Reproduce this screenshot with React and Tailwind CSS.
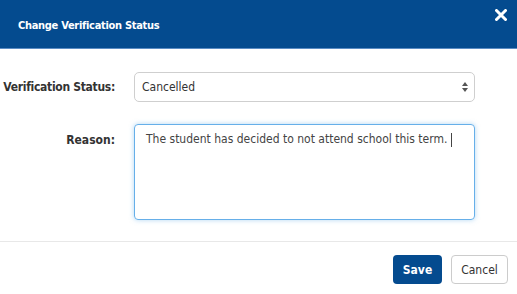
export default function App() {
  return (
    <div className="w-[517px] h-[294px] bg-white overflow-hidden" style={{ fontFamily: '"DejaVu Sans Condensed", "DejaVu Sans", sans-serif' }}>
      {/* Header */}
      <div className="h-[49px] bg-[#044b8f] border-b border-[#5b8cc4] flex items-center justify-between pl-[18px] pr-[10px]">
        <h2 className="text-white font-bold text-[11px] tracking-[-0.3px] mt-[4px]">Change Verification Status</h2>
        <button className="text-white mb-[19px]">
          <svg width="12" height="12" viewBox="0 0 12 12">
            <path d="M1.5 1.5 L10.5 10.5 M10.5 1.5 L1.5 10.5" stroke="white" strokeWidth="3" strokeLinecap="round" />
          </svg>
        </button>
      </div>

      {/* Body */}
      <div className="h-[193px] border-b border-[#e8e8e8] pt-[23px] pr-[42px]">
        <div className="flex items-center">
          <label className="w-[116px] whitespace-nowrap text-right pr-[1px] text-[12px] tracking-[-0.3px] font-bold text-[#333]">Verification Status:</label>
          <div className="ml-[18px] flex-1 h-[30px] border border-[#cfcfcf] rounded-[5px] flex items-center justify-between pl-[7px] pr-[6px] text-[12px] text-[#333]">
            <span>Cancelled</span>
            <svg width="6" height="10" viewBox="0 0 6 10">
              <path d="M3 0 L6 4 L0 4 Z" fill="#555" />
              <path d="M3 10 L6 6 L0 6 Z" fill="#555" />
            </svg>
          </div>
        </div>

        <div className="flex items-start mt-[22px]">
          <label className="w-[116px] whitespace-nowrap text-right pr-[1px] pt-[7px] text-[12px] font-bold text-[#333]">Reason:</label>
          <div className="ml-[18px] flex-1 h-[96px] border border-[#66afe9] rounded-[4px] shadow-[0_0_5px_rgba(102,175,233,0.5)] px-[11px] pt-[5px] text-[12px] text-[#444]">
            The student has decided to not attend school this term. <span className="inline-block w-px h-[14px] bg-[#444] align-middle"></span>
          </div>
        </div>
      </div>

      {/* Footer */}
      <div className="flex justify-end gap-[9px] pt-[13px] pr-[9px]">
        <button className="h-[29px] w-[49px] rounded-[4px] bg-[#044b8f] text-white text-[12px] font-bold">Save</button>
        <button className="h-[29px] w-[57px] rounded-[4px] border border-[#ccc] bg-white text-[#333] text-[12px]">Cancel</button>
      </div>
    </div>
  );
}
